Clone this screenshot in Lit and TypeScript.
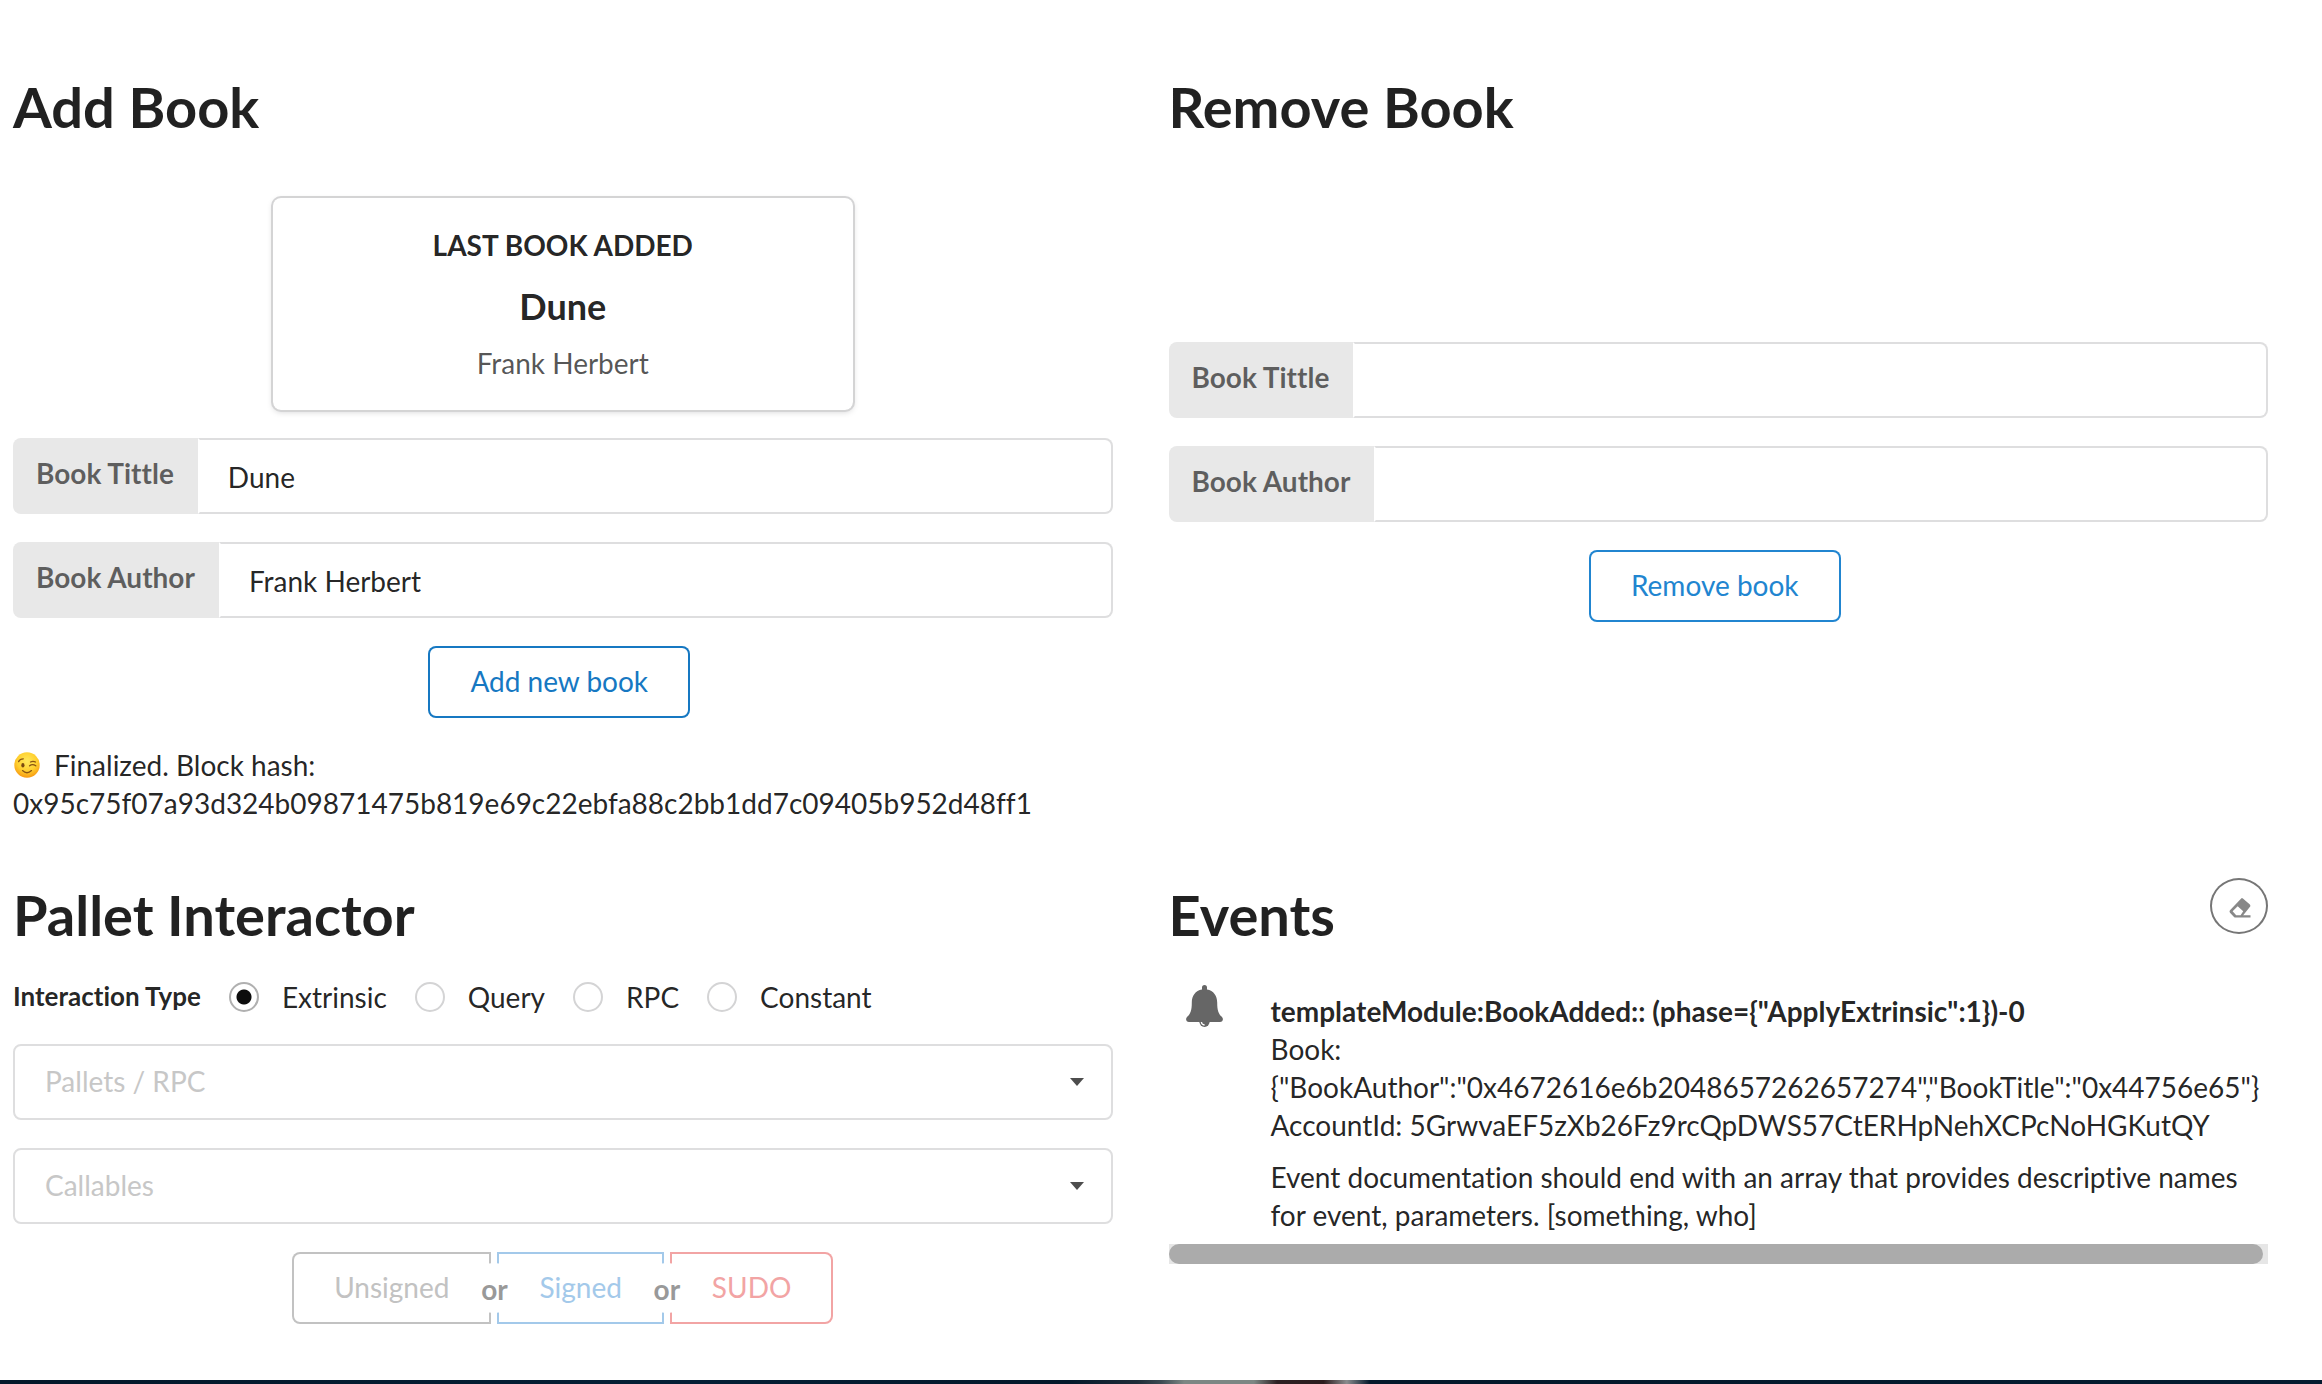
import { LitElement, html, css, svg } from "lit";
import { customElement, property } from "lit/decorators.js";

const base = css`
  :host {
    display: block;
    font-family: Lato, "Liberation Sans", sans-serif;
    font-size: 28px;
    line-height: 38px;
    font-variant-ligatures: none;
    color: rgba(0, 0, 0, 0.87);
  }
  * {
    box-sizing: border-box;
  }
  h1 {
    margin: 0;
    padding-top: 2px;
    font-size: 56px;
    line-height: 70px;
    font-weight: 700;
  }
  button {
    font: inherit;
    font-variant-ligatures: none;
    line-height: 28px;
    padding: 21px 42px 23px;
    border: 0;
    border-radius: 8px;
    background: transparent;
    cursor: pointer;
  }
  button.primary {
    color: #2185d0;
    box-shadow: inset 0 0 0 2px currentColor;
  }
  button.active {
    color: #1678c2;
  }
  .actions {
    display: flex;
    justify-content: center;
    margin-top: 28px;
    padding-right: 7px;
  }
`;

const winkFace = svg`
  <svg class="face" viewBox="0 0 26 26" aria-hidden="true">
    <defs>
      <radialGradient id="skin" cx="0.5" cy="0.35" r="0.65">
        <stop offset="0" stop-color="#ffe95c"></stop>
        <stop offset="0.6" stop-color="#ffcf2e"></stop>
        <stop offset="1" stop-color="#f79a12"></stop>
      </radialGradient>
    </defs>
    <circle cx="13" cy="13" r="12.7" fill="url(#skin)"></circle>
    <ellipse cx="8.9" cy="13.2" rx="1.6" ry="2.2" fill="#7a4a10"></ellipse>
    <g fill="none" stroke="#8a5412" stroke-width="1.3" stroke-linecap="round">
      <path d="M4.6 9.6Q6 6.800 9.300 6.800"></path>
      <path d="M16.500 10Q19 8.600 21.500 10"></path>
      <path d="M15.600 13.800Q18.500 11.300 21.800 13.800"></path>
      <path d="M8.500 18.600Q13 22.800 17.500 18.600"></path>
    </g>
  </svg>`;

@customElement("labeled-input")
export class LabeledInput extends LitElement {
  @property() label = "";
  @property() value = "";

  static styles = [
    base,
    css`
      .field {
        display: flex;
        height: 76px;
      }
      label {
        flex: none;
        padding: 21px 24px 0 23px;
        line-height: 28px;
        font-weight: 700;
        color: rgba(0, 0, 0, 0.6);
        background: #e8e8e8;
        border-radius: 8px 0 0 8px;
      }
      input {
        flex: 1;
        min-width: 0;
        padding: 2px 28px 0;
        font: inherit;
        color: inherit;
        background: #fff;
        border: 2px solid #dededf;
        border-left-color: transparent;
        border-radius: 0 8px 8px 0;
        outline: 0;
      }
    `,
  ];

  render() {
    return html`<div class="field">
      <label for="box">${this.label}</label>
      <input id="box" type="text" .value=${this.value} />
    </div>`;
  }
}

@customElement("add-book")
export class AddBook extends LitElement {
  static styles = [
    base,
    css`
      .card {
        width: 580px;
        max-width: 100%;
        margin: 56px auto 28px;
        padding: 29px 28px 27px;
        text-align: center;
        border-radius: 8px;
        box-shadow: 0 2px 6px 0 #d4d4d5, 0 0 0 2px #d4d4d5;
      }
      .caption {
        line-height: 36px;
        font-weight: 700;
      }
      .title {
        margin: 20px 0 14px;
        font-size: 36px;
        line-height: 46px;
        font-weight: 700;
      }
      .author {
        line-height: 40px;
        color: rgba(0, 0, 0, 0.68);
      }
      .fields {
        display: grid;
        gap: 28px;
      }
      .status {
        margin-top: 28px;
        overflow-wrap: anywhere;
      }
      .line {
        display: flex;
        align-items: center;
        gap: 14px;
      }
      .face {
        width: 26px;
        height: 26px;
        margin-left: 1px;
      }
    `,
  ];

  render() {
    return html`
      <h1>Add Book</h1>
      <div class="card">
        <div class="caption">LAST BOOK ADDED</div>
        <div class="title">Dune</div>
        <div class="author">Frank Herbert</div>
      </div>
      <div class="fields">
        <labeled-input label="Book Tittle" value="Dune"></labeled-input>
        <labeled-input label="Book Author" value="Frank Herbert"></labeled-input>
      </div>
      <div class="actions">
        <button class="primary active" type="button">Add new book</button>
      </div>
      <div class="status">
        <div class="line">${winkFace}<span>Finalized. Block hash:</span></div>
        <div>0x95c75f07a93d324b09871475b819e69c22ebfa88c2bb1dd7c09405b952d48ff1</div>
      </div>
    `;
  }
}

@customElement("remove-book")
export class RemoveBook extends LitElement {
  static styles = [
    base,
    css`
      .fields {
        display: grid;
        gap: 28px;
        margin-top: 200px;
      }
    `,
  ];

  render() {
    return html`
      <h1>Remove Book</h1>
      <div class="fields">
        <labeled-input label="Book Tittle"></labeled-input>
        <labeled-input label="Book Author"></labeled-input>
      </div>
      <div class="actions">
        <button class="primary" type="button">Remove book</button>
      </div>
    `;
  }
}

@customElement("pallet-interactor")
export class PalletInteractor extends LitElement {
  static styles = [
    base,
    css`
      .types {
        display: flex;
        align-items: center;
        gap: 28px;
        margin: 30px 0;
        line-height: 34px;
      }
      .legend {
        padding-bottom: 2px;
        font-size: 26px;
        line-height: 32px;
        font-weight: 700;
      }
      .type {
        display: flex;
        align-items: center;
        gap: 23px;
      }
      .type input {
        appearance: none;
        width: 30px;
        height: 30px;
        margin: 0;
        border: 2px solid #d4d4d5;
        border-radius: 50%;
        background: #fff;
      }
      .type input:checked {
        border-color: #b0b0b0;
        background: radial-gradient(circle, #0d0d0d 7px, #fff 8px);
      }
      .selects {
        display: grid;
        gap: 28px;
      }
      .select {
        display: grid;
        align-items: center;
      }
      .select > * {
        grid-area: 1 / 1;
      }
      select {
        appearance: none;
        width: 100%;
        height: 76px;
        padding: 0 60px 2px 30px;
        font: inherit;
        color: #c7c7c7;
        background: #fff;
        border: 2px solid #dededf;
        border-radius: 8px;
      }
      .caret {
        justify-self: end;
        width: 14px;
        height: 8px;
        margin-right: 29px;
        fill: #4d4d4d;
        pointer-events: none;
      }
      .group {
        display: flex;
        justify-content: center;
        margin-top: 28px;
      }
      .group button {
        border-radius: 0;
        box-shadow: inset 0 0 0 2px currentColor;
      }
      .group .unsigned {
        color: #c2c2c2;
        border-radius: 8px 0 0 8px;
      }
      .group .signed {
        color: #a3c9ea;
      }
      .group .sudo {
        color: #f2a4a4;
        border-radius: 0 8px 8px 0;
      }
      .or {
        z-index: 1;
        display: flex;
        align-items: center;
        justify-content: center;
        align-self: center;
        width: 50px;
        height: 50px;
        margin: 0 -22px;
        padding-top: 2px;
        font-weight: 700;
        color: #999;
        background: #fff;
        border-radius: 25px;
      }
    `,
  ];

  private types = ["Extrinsic", "Query", "RPC", "Constant"];

  private dropdown(label: string) {
    return html`<div class="select">
      <select aria-label=${label}>
        <option>${label}</option>
      </select>
      <svg class="caret" viewBox="0 0 14 8" aria-hidden="true"><path d="M0 0H14L7 8Z"></path></svg>
    </div>`;
  }

  render() {
    return html`
      <h1>Pallet Interactor</h1>
      <div class="types" role="radiogroup" aria-labelledby="legend">
        <span class="legend" id="legend">Interaction Type</span>
        ${this.types.map(
          (name, i) => html`<label class="type">
            <input type="radio" name="interaction" .checked=${i === 0} />${name}
          </label>`
        )}
      </div>
      <div class="selects">${this.dropdown("Pallets / RPC")} ${this.dropdown("Callables")}</div>
      <div class="group">
        <button class="unsigned" type="button">Unsigned</button>
        <span class="or">or</span>
        <button class="signed" type="button">Signed</button>
        <span class="or">or</span>
        <button class="sudo" type="button">SUDO</button>
      </div>
    `;
  }
}

@customElement("event-feed")
export class EventFeed extends LitElement {
  static styles = [
    base,
    css`
      .head {
        display: flex;
        justify-content: space-between;
        align-items: flex-start;
      }
      .clear {
        display: flex;
        align-items: center;
        justify-content: center;
        width: 58px;
        height: 56px;
        padding: 3px 0 0 2px;
        color: #767676;
        border-radius: 50%;
        box-shadow: inset 0 0 0 2px currentColor;
      }
      .eraser {
        width: 22px;
        height: 20px;
      }
      .event {
        display: flex;
        align-items: flex-start;
        gap: 48px;
        margin-top: 35px;
        padding-left: 17px;
      }
      .bell {
        flex: none;
        width: 37px;
        height: 42px;
      }
      .content {
        flex: 1;
        min-width: 0;
        padding-top: 7px;
      }
      .summary {
        font-weight: 700;
      }
      .data {
        white-space: nowrap;
      }
      .docs {
        margin-top: 14px;
      }
      .track {
        height: 20px;
        margin-top: 10px;
        padding-right: 5px;
        background: #e6e6e6;
      }
      .thumb {
        height: 20px;
        border-radius: 10px;
        background: #ababab;
      }
    `,
  ];

  render() {
    return html`
      <div class="head">
        <h1>Events</h1>
        <button class="clear" type="button" aria-label="Clear events">
          <svg class="eraser" viewBox="0 0 22 20" aria-hidden="true">
            <path
              fill="#888"
              fill-rule="evenodd"
              d="M12.200 0.400Q13 -0.200 13.900 0.500L20.600 6.200Q22 7.500 20.800 9L14.200 17.300H21.500V19.500H6.500Q5.600 19.500 5 18.900L1 14.700Q0 13.400 1.200 12ZM8.700 8.200L3.600 13.200L7.200 17.200H11.600L14.200 13.300Z"
            ></path>
          </svg>
        </button>
      </div>
      <div class="event">
        <svg class="bell" viewBox="0 0 37 42" aria-hidden="true">
          <path
            fill="#666"
            d="M18.500 0Q21 0 21 2.500V4.600C27.600 5.800 31.200 10.800 31.200 17.500C31.200 25.500 32.500 28.800 35.800 31.800C38 34 36.700 37 34 37H3C0.300 37-1 34 1.200 31.800C4.500 28.800 5.800 25.500 5.800 17.500C5.800 10.800 9.400 5.800 16 4.600V2.500Q16 0 18.500 0Z"
          ></path>
          <path fill="#666" d="M13.200 36H23.800A5.300 6 0 0 1 13.200 36Z"></path>
          <path fill="none" stroke="#fff" stroke-width="1.300" d="M15.400 37Q15.600 39.800 18.600 40"></path>
        </svg>
        <div class="content">
          <div class="summary">templateModule:BookAdded:: (phase={"ApplyExtrinsic":1})-0</div>
          <div>Book:</div>
          <div class="data">{"BookAuthor":"0x4672616e6b2048657262657274","BookTitle":"0x44756e65"}</div>
          <div class="data">AccountId: 5GrwvaEF5zXb26Fz9rcQpDWS57CtERHpNehXCPcNoHGKutQY</div>
          <div class="docs">
            Event documentation should end with an array that provides descriptive names for event,
            parameters. [something, who]
          </div>
        </div>
      </div>
      <div class="track"><div class="thumb"></div></div>
    `;
  }
}

@customElement("app-root")
export class AppRoot extends LitElement {
  static styles = [
    base,
    css`
      .page {
        display: flex;
        flex-direction: column;
        min-height: 100vh;
        background: #fff;
      }
      .grid {
        display: grid;
        grid-template-columns: minmax(0, 1fr) minmax(0, 1fr);
        gap: 56px;
        padding: 70px 54px 52px 13px;
      }
      .photo {
        height: 4px;
        margin-top: auto;
        background: linear-gradient(
          90deg,
          #03182a 0%,
          #041f35 30%,
          #03182a 46%,
          #1f2c38 49%,
          #3c4a52 50%,
          #7c8784 51%,
          #7c8784 54%,
          #2c2023 55%,
          #2c1c1e 57%,
          #8a8c8e 58%,
          #03182a 59%,
          #041c30 100%
        );
      }
    `,
  ];

  render() {
    return html`
      <div class="page">
        <main class="grid">
          <add-book></add-book>
          <remove-book></remove-book>
          <pallet-interactor></pallet-interactor>
          <event-feed></event-feed>
        </main>
        <div class="photo"></div>
      </div>
    `;
  }
}
